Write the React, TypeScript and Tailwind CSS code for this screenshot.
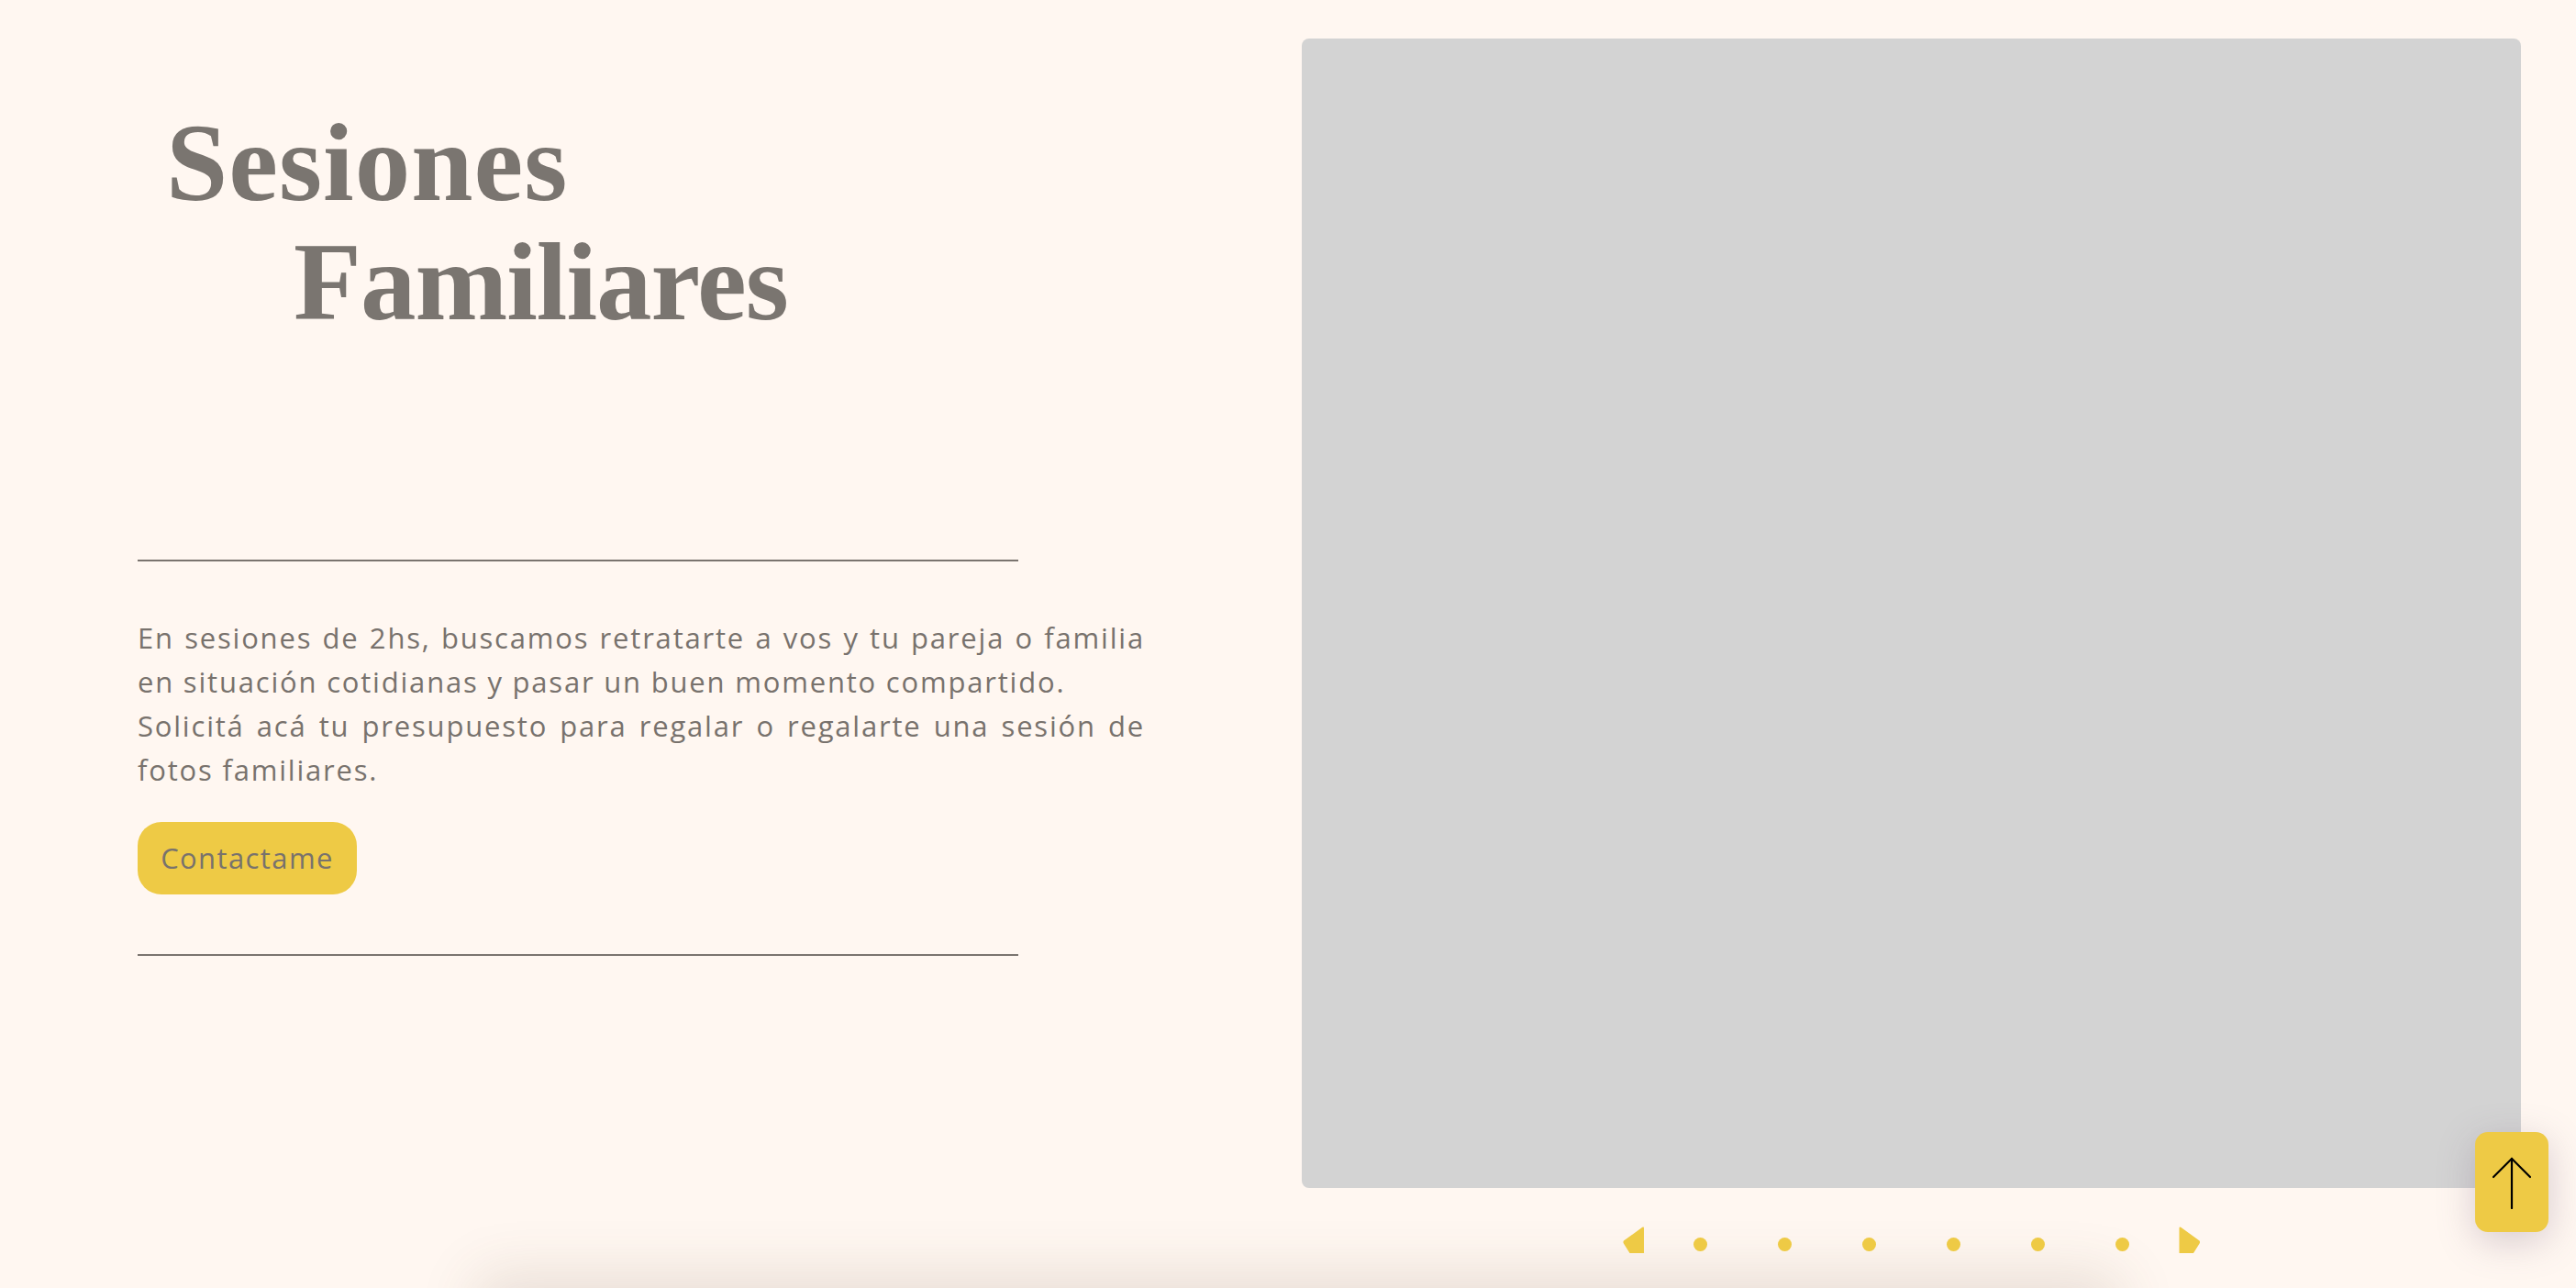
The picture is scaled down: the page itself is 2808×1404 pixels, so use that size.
import React from "react";

function CaretLeft() {
  return (
    <svg width="23" height="29" viewBox="0 0 23 29" className="block">
      <path d="M21.3 0.8 Q23 -0.4 23 1.8 L23 29 L7.5 29 L0.9 18.4 Q0 17 0.9 15.6 Z" fill="#eeca45" />
    </svg>
  );
}

function CaretRight() {
  return (
    <svg width="24" height="29" viewBox="0 0 23 29" className="block -scale-x-100">
      <path d="M21.3 0.8 Q23 -0.4 23 1.8 L23 29 L7.5 29 L0.9 18.4 Q0 17 0.9 15.6 Z" fill="#eeca45" />
    </svg>
  );
}

export default function App() {
  const dots = [0, 1, 2, 3, 4, 5];

  return (
    <div className="min-h-screen bg-[#fff7f1]">
      <section className="h-[1404px] flex">
        {/* texto */}
        <div className="w-[1419px] pl-[150px] pt-[112px]">
          <h1 className="font-['Liberation_Serif',serif] font-bold text-[121px] leading-[130px] text-[#7a7570] pl-[31px]">
            <span className="block tracking-[1px]">Sesiones</span>
            <span className="block pl-[139px] tracking-[-1px]">Familiares</span>
          </h1>

          <div className="w-[960px] h-[2px] bg-[#7a746f] mt-[238px]"></div>

          <div className="w-[1098px] mt-[59px] font-['Open_Sans',sans-serif] text-[31px] leading-[48px] tracking-[1.8px] text-[#78726d] text-justify">
            <p className="[text-align-last:justify]">
              En sesiones de 2hs, buscamos retratarte a vos y tu pareja o familia
            </p>
            <p>en situación cotidianas y pasar un buen momento compartido.</p>
            <p className="[text-align-last:justify]">
              Solicitá acá tu presupuesto para regalar o regalarte una sesión de
            </p>
            <p>fotos familiares.</p>
          </div>

          <button className="mt-[33px] w-[239px] h-[79px] rounded-[26px] bg-[#eeca45] font-['Open_Sans',sans-serif] text-[31px] tracking-[1.4px] text-[#78726d]">
            Contactame
          </button>

          <div className="w-[960px] h-[2px] bg-[#7a746f] mt-[65px]"></div>
        </div>

        {/* galeria */}
        <div className="pt-[42px]">
          <div className="w-[1329px] h-[1253px] rounded-[8px] bg-[#d3d3d3]"></div>
          <div className="mt-[42px] flex items-start justify-center">
            <CaretLeft />
            <div className="flex gap-[77px] mx-[54px] mt-[12px]">
              {dots.map((d) => (
                <span key={d} className="block w-[15px] h-[15px] rounded-full bg-[#eeca45]"></span>
              ))}
            </div>
            <CaretRight />
          </div>
        </div>
      </section>

      <div className="ml-[520px] w-[1790px] h-[300px] bg-[#fff7f1] shadow-[0_-14px_60px_rgba(90,70,50,0.14)]"></div>

      <button className="fixed right-[30px] bottom-[61px] w-[80px] h-[109px] rounded-[14px] bg-[#eeca45] flex items-center justify-center shadow-[0_10px_40px_rgba(110,90,120,0.28)]">
        <svg width="44" height="58" viewBox="0 0 44 58" fill="none" stroke="#000" strokeWidth="2.2" strokeLinecap="round">
          <path d="M22 3 V57" />
          <path d="M2 23 L22 3 L42 23" />
        </svg>
      </button>
    </div>
  );
}
